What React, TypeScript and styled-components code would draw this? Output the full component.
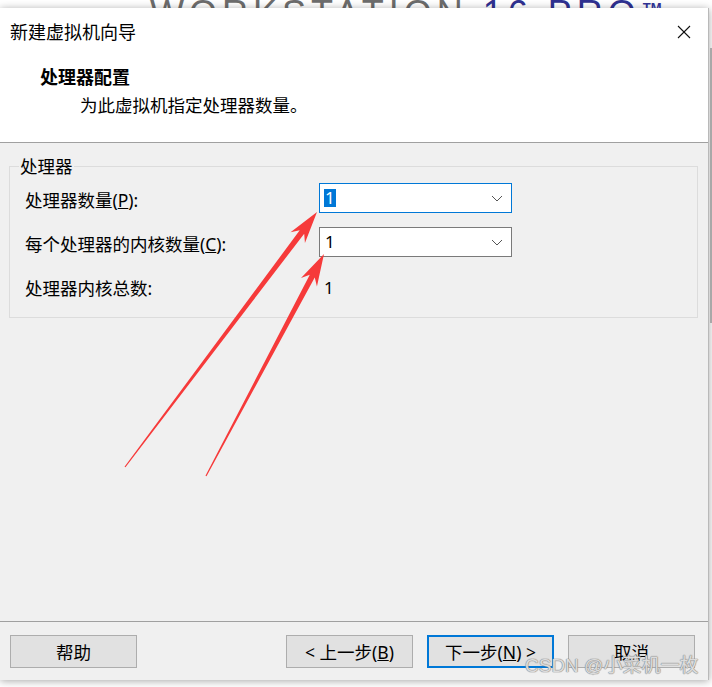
import React from "react";
import styled, { createGlobalStyle } from "styled-components";

const Global = createGlobalStyle`
  html, body { margin: 0; padding: 0; background: #ffffff; }
  body {
    width: 712px;
    height: 687px;
    overflow: hidden;
    font-family: "Noto Sans", "Noto Sans CJK SC", sans-serif;
    color: #000;
  }
  * { box-sizing: border-box; }
`;

const Page = styled.div`
  position: relative;
  width: 712px;
  height: 687px;
  overflow: hidden;
  background: #ffffff;
  display: flex;
  flex-direction: column;
`;

const Backdrop = styled.div`
  height: 8px;
  flex: none;
  overflow: hidden;
  display: flex;
  padding-left: 150px;
  background: #ffffff;
`;

const Brand = styled.div`
  margin-top: -4px;
  font-family: "Liberation Sans", "Noto Sans", sans-serif;
  font-size: 36px;
  line-height: 36px;
  letter-spacing: 5px;
  color: #6d6d6d;
  white-space: nowrap;
`;

const BrandAccent = styled.span`
  color: #2f3191;
`;

const Tm = styled.span`
  font-size: 13px;
  font-weight: bold;
  vertical-align: top;
  line-height: 13px;
  letter-spacing: 0;
  color: #2f3191;
  margin-left: 2px;
  position: relative;
  top: 5px;
`;

const Shell = styled.div`
  display: flex;
  flex: none;
`;

const Dialog = styled.div`
  width: 709px;
  height: 672px;
  background: #f0f0f0;
  display: flex;
  flex-direction: column;
  box-shadow: 0 1px 8px rgba(0, 0, 0, 0.35);
  border-right: 1px solid #b9b9b9;
`;

const SideStrip = styled.div`
  flex: 1;
  display: flex;
  flex-direction: column;
  align-items: flex-end;
  padding-top: 40px;
`;

const Thumb = styled.div`
  width: 2px;
  height: 275px;
  background: #a8a8a8;
`;

const TitleBar = styled.div`
  height: 47px;
  flex: none;
  background: #ffffff;
  display: flex;
  align-items: center;
  justify-content: space-between;
  padding: 0 17px 0 10px;
`;

const TitleText = styled.div`
  font-size: 18px;
  line-height: 24px;
  color: #000;
`;

const CloseIcon = styled.svg`
  width: 14px;
  height: 14px;
  display: block;
`;

const Header = styled.div`
  height: 88px;
  flex: none;
  background: #ffffff;
  border-bottom: 1px solid #a0a0a0;
  padding: 10px 0 0 40px;
  display: flex;
  flex-direction: column;
  gap: 4px;
`;

const HeaderTitle = styled.div`
  font-size: 18px;
  line-height: 24px;
  font-weight: bold;
`;

const HeaderSub = styled.div`
  font-size: 17.5px;
  line-height: 24px;
  padding-left: 40px;
`;

const Body = styled.div`
  flex: 1;
  padding: 11px 0 0 9px;
`;

const Group = styled.fieldset`
  width: 689px;
  margin: 0;
  border: 1px solid #dcdcdc;
  padding: 5px 0 16px 15px;
  display: grid;
  grid-template-columns: 294px 193px;
  grid-auto-rows: 30px;
  row-gap: 14px;
`;

const GroupLegend = styled.legend`
  font-size: 17.5px;
  line-height: 24px;
  padding: 0 1px;
  margin-left: -6px;
  color: #000;
`;

const Label = styled.div`
  font-size: 17.5px;
  line-height: 24px;
  display: flex;
  align-items: center;
  padding-top: 4px;
  white-space: nowrap;
`;

const Select = styled.div<{ $focused?: boolean }>`
  height: 30px;
  background: #ffffff;
  border: 1px solid ${(p) => (p.$focused ? "#0078d7" : "#7a7a7a")};
  display: flex;
  align-items: center;
  justify-content: space-between;
  padding: 0 8px 0 4px;
`;

const SelectValue = styled.span<{ $selected?: boolean }>`
  font-size: 17px;
  line-height: 18px;
  padding: 0 1px;
  background: ${(p) => (p.$selected ? "#0078d7" : "transparent")};
  color: ${(p) => (p.$selected ? "#ffffff" : "#000000")};
`;

const Chevron = styled.svg`
  width: 12px;
  height: 7px;
  display: block;
`;

const Value = styled.div`
  font-size: 17px;
  line-height: 24px;
  display: flex;
  align-items: center;
  padding: 4px 0 0 5px;
`;

const Footer = styled.div`
  height: 59px;
  flex: none;
  border-top: 1px solid #a0a0a0;
  display: flex;
  align-items: flex-start;
  padding: 13px 13px 0 10px;
`;

const Spacer = styled.div`
  flex: 1;
`;

const Button = styled.div<{ $primary?: boolean; $gap?: number }>`
  width: 127px;
  height: 33px;
  margin-left: ${(p) => p.$gap ?? 0}px;
  background: #e1e1e1;
  border: ${(p) => (p.$primary ? "2px solid #0078d7" : "1px solid #adadad")};
  display: flex;
  align-items: center;
  justify-content: center;
  font-size: 17.5px;
  line-height: 24px;
  color: #000;
  white-space: nowrap;
`;

const Overlay = styled.svg`
  position: absolute;
  left: 0;
  top: 0;
  width: 712px;
  height: 687px;
  pointer-events: none;
`;

const Watermark = styled.div`
  position: absolute;
  left: 525px;
  top: 653px;
  font-family: "Liberation Sans", "Noto Sans CJK SC", sans-serif;
  font-size: 19px;
  line-height: 26px;
  color: rgba(236, 236, 236, 0.85);
  text-shadow: 0 0 1px #8a8a8a, 0 0 1px #8a8a8a, 0 0 1px #8a8a8a;
  white-space: nowrap;
  pointer-events: none;
`;

type Pt = [number, number];

function arrowPoints(tail: Pt, tip: Pt, headLen = 32, shaft = 2.8, head = 9): string {
  const dx = tip[0] - tail[0];
  const dy = tip[1] - tail[1];
  const len = Math.hypot(dx, dy);
  const ux = dx / len;
  const uy = dy / len;
  const nx = -uy;
  const ny = ux;
  const bx = tip[0] - ux * headLen;
  const by = tip[1] - uy * headLen;
  const bkx = tip[0] - ux * (headLen - 7);
  const bky = tip[1] - uy * (headLen - 7);
  const pts: Pt[] = [
    [tail[0] + nx * 0.6, tail[1] + ny * 0.6],
    [bkx + nx * shaft, bky + ny * shaft],
    [bx + nx * head, by + ny * head],
    tip,
    [bx - nx * head, by - ny * head],
    [bkx - nx * shaft, bky - ny * shaft],
    [tail[0] - nx * 0.6, tail[1] - ny * 0.6],
  ];
  return pts.map((p) => `${p[0].toFixed(2)},${p[1].toFixed(2)}`).join(" ");
}

const ChevronIcon = () => (
  <Chevron viewBox="0 0 12 7">
    <polyline points="1,1 6,6 11,1" fill="none" stroke="#555" strokeWidth="1" />
  </Chevron>
);

export default function App() {
  return (
    <>
      <Global />
      <Page>
        <Backdrop>
          <Brand>
            WORKSTATION <BrandAccent>16 PRO</BrandAccent>
            <Tm>TM</Tm>
          </Brand>
        </Backdrop>
        <Shell>
          <Dialog>
            <TitleBar>
              <TitleText>新建虚拟机向导</TitleText>
              <CloseIcon viewBox="0 0 14 14">
                <line x1="1" y1="1" x2="13" y2="13" stroke="#111" strokeWidth="1.1" />
                <line x1="13" y1="1" x2="1" y2="13" stroke="#111" strokeWidth="1.1" />
              </CloseIcon>
            </TitleBar>
            <Header>
              <HeaderTitle>处理器配置</HeaderTitle>
              <HeaderSub>为此虚拟机指定处理器数量。</HeaderSub>
            </Header>
            <Body>
              <Group>
                <GroupLegend>处理器</GroupLegend>
                <Label>
                  处理器数量(<u>P</u>):
                </Label>
                <Select $focused>
                  <SelectValue $selected>1</SelectValue>
                  <ChevronIcon />
                </Select>
                <Label>
                  每个处理器的内核数量(<u>C</u>):
                </Label>
                <Select>
                  <SelectValue>1</SelectValue>
                  <ChevronIcon />
                </Select>
                <Label>处理器内核总数:</Label>
                <Value>1</Value>
              </Group>
            </Body>
            <Footer>
              <Button>帮助</Button>
              <Spacer />
              <Button>
                &lt; 上一步(<u>B</u>)
              </Button>
              <Button $primary $gap={14}>
                下一步(<u>N</u>) &gt;
              </Button>
              <Button $gap={14}>取消</Button>
            </Footer>
          </Dialog>
          <SideStrip>
            <Thumb />
          </SideStrip>
        </Shell>
        <Overlay viewBox="0 0 712 687">
          <polygon points={arrowPoints([125, 467], [317, 212])} fill="#f63a3a" />
          <polygon points={arrowPoints([206, 476], [324, 254])} fill="#f63a3a" />
        </Overlay>
        <Watermark>CSDN @小菜机一枚</Watermark>
      </Page>
    </>
  );
}
